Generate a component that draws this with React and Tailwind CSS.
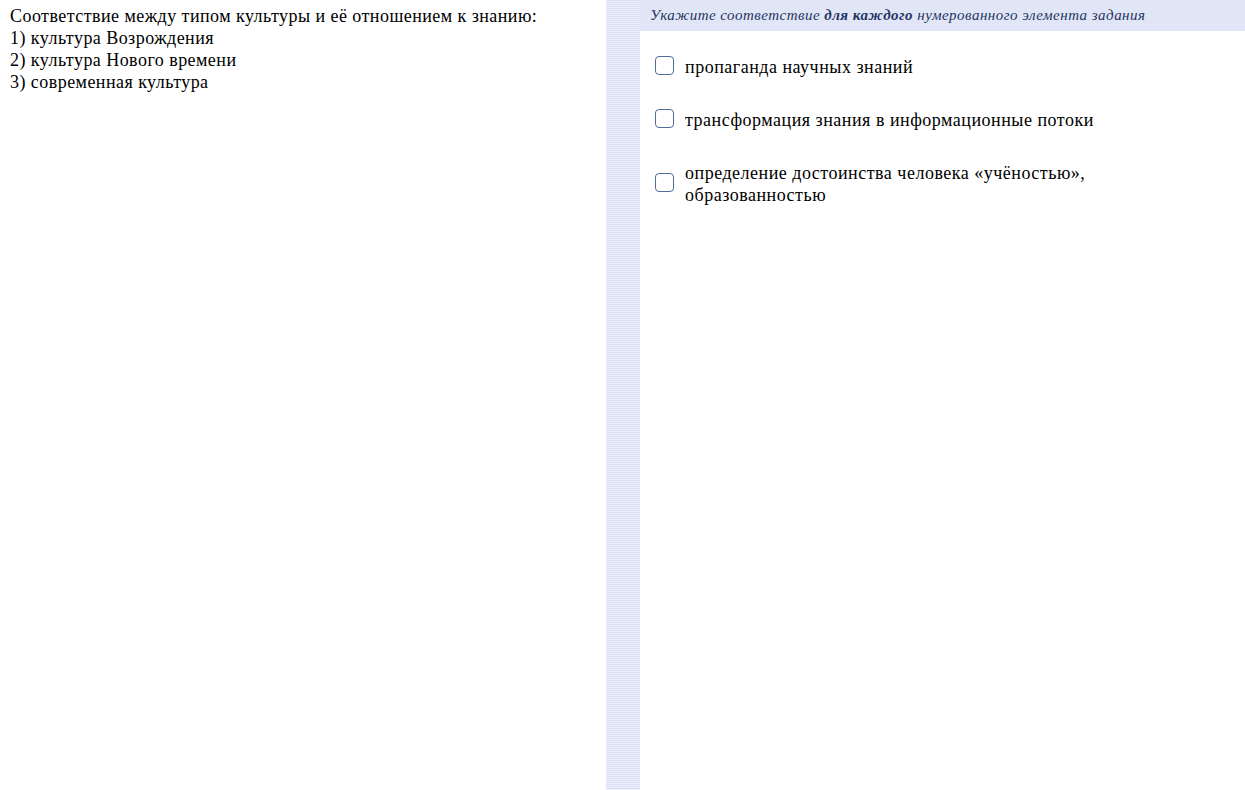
export default function App() {
  const items = [
    'пропаганда научных знаний',
    'трансформация знания в информационные потоки',
    'определение достоинства человека «учёностью», образованностью',
  ];

  return (
    <div className="flex h-[790px] w-[1245px] bg-white [font-family:'Liberation_Serif',serif] text-black">
      <div className="w-[606px] shrink-0 px-[10px] pt-[5px] text-[18px] leading-[22px] tracking-[0.45px]">
        <div>Соответствие между типом культуры и её отношением к знанию:</div>
        <div>1) культура Возрождения</div>
        <div>2) культура Нового времени</div>
        <div>3) современная культура</div>
      </div>
      <div className="w-[34px] shrink-0 bg-[repeating-linear-gradient(to_bottom,#dde3f6_0px,#dde3f6_1px,#eaeefa_1px,#eaeefa_2px)]" />
      <div className="flex-1">
        <div className="flex h-[31px] items-center bg-[#e0e6f6] pl-[10px] text-[15px] italic tracking-[0.47px] text-[#263463]">
          <span>
            Укажите соответствие <b className="font-bold">для каждого</b> нумерованного элемента задания
          </span>
        </div>
        <div className="flex flex-col gap-[31px] pl-[15px] pr-[40px] pt-[25px]">
          {items.map((t) => (
            <label key={t} className="flex items-center gap-[11px] text-[18px] leading-[22px] tracking-[0.5px]">
              <span className="h-[19px] w-[19px] shrink-0 -translate-y-[2px] rounded-[4px] border-[1.5px] border-[#4f6b96] bg-white" />
              <span className="max-w-[430px]">{t}</span>
            </label>
          ))}
        </div>
      </div>
    </div>
  );
}
